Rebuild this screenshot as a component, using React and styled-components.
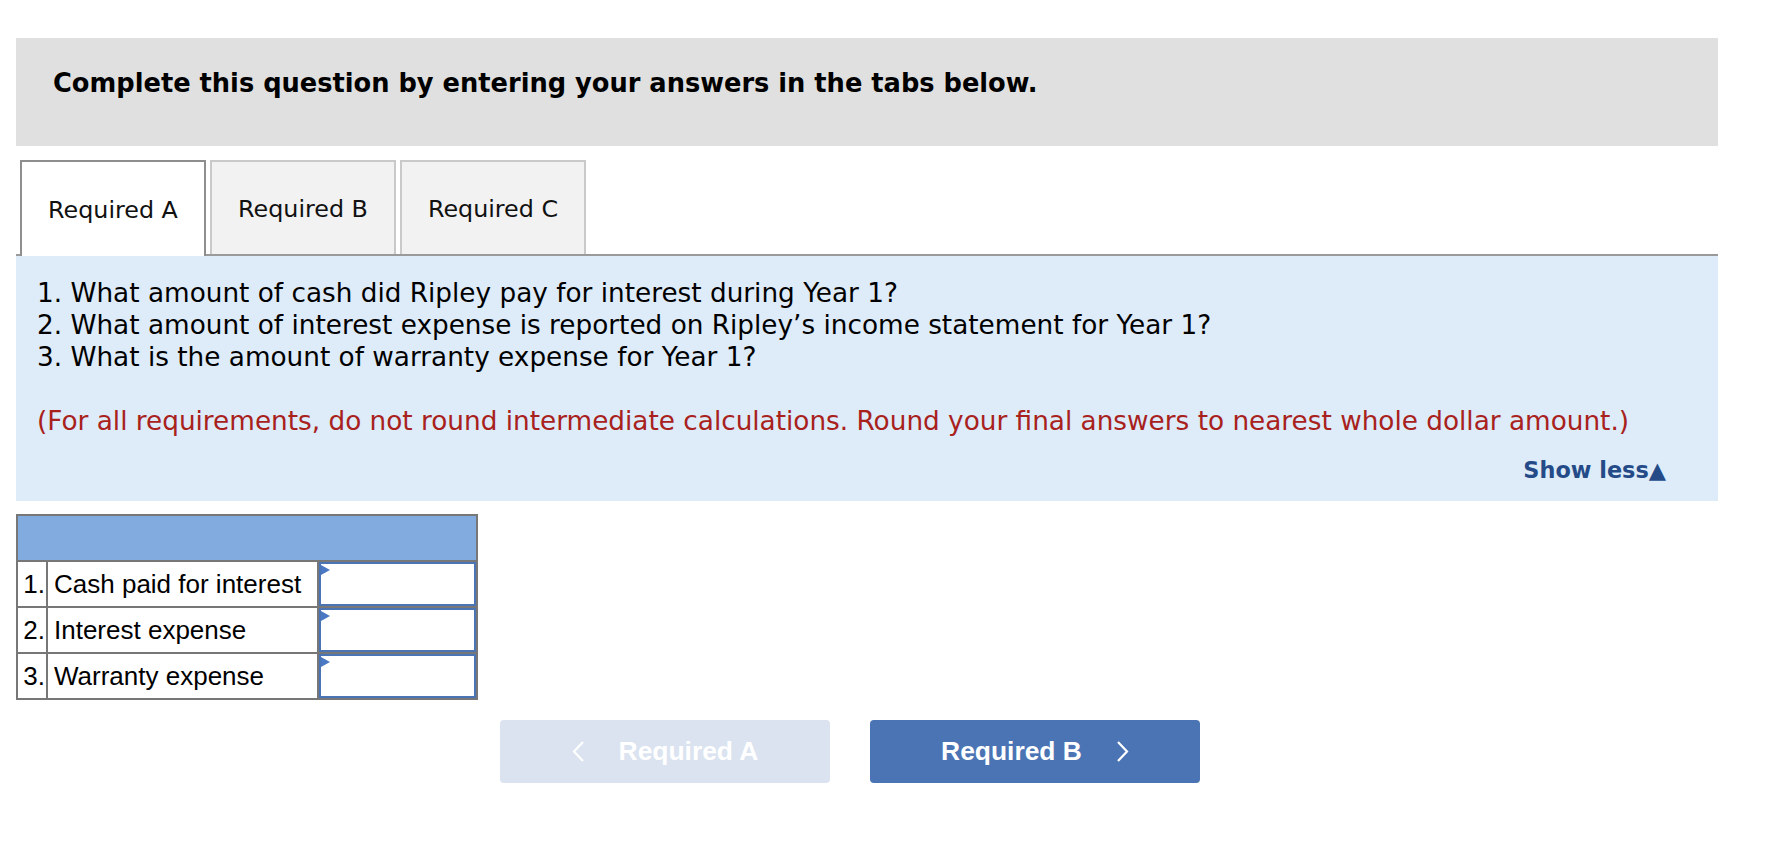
import React, { useState } from "react";
import styled, { createGlobalStyle } from "styled-components";

const GlobalStyle = createGlobalStyle`
  body {
    margin: 0;
    background: #fff;
    color: #000;
    font-family: "DejaVu Sans", Verdana, sans-serif;
  }
`;

const Page = styled.div`
  width: 1702px;
  padding: 38px 0 60px 16px;
`;

const Banner = styled.div`
  box-sizing: border-box;
  height: 108px;
  padding: 29px 37px 0;
  background: #e0e0e0;
  font-size: 25.7px;
  font-weight: bold;
  line-height: 32px;
`;

const TabList = styled.div`
  display: flex;
  align-items: flex-end;
  gap: 4px;
  margin-top: 14px;
  padding-left: 4px;
  border-bottom: 2px solid #9a9a9a;
`;

const Tab = styled.div`
  box-sizing: border-box;
  width: 186px;
  height: ${(p) => (p.$active ? "96px" : "94px")};
  margin-bottom: ${(p) => (p.$active ? "-2px" : "0")};
  padding-top: 2px;
  display: flex;
  align-items: center;
  justify-content: center;
  border: 2px solid ${(p) => (p.$active ? "#8e8e8e" : "#c9c9c9")};
  border-bottom: none;
  background: ${(p) => (p.$active ? "#fff" : "#f2f2f2")};
  font-size: 23.8px;
  color: #111;
  cursor: pointer;
`;

const Panel = styled.div`
  padding: 21px 52px 17px 21px;
  background: #deebf8;
`;

const Line = styled.div`
  font-size: 26.3px;
  line-height: 32px;
`;

const Note = styled(Line)`
  margin-top: 32px;
  color: #a8211c;
`;

const ShowLess = styled.div`
  margin-top: 19px;
  text-align: right;
  font-size: 22.4px;
  font-weight: bold;
  line-height: 28px;
  color: #244b88;
`;

const Grid = styled.div`
  display: inline-grid;
  grid-template-columns: 28px 269px 157px;
  grid-auto-rows: 44px;
  gap: 2px;
  margin-top: 13px;
  border: 2px solid #777;
  background: #777;
  font-family: "Liberation Sans", Arial, sans-serif;
  font-size: 26px;
`;

const HeadCell = styled.div`
  grid-column: 1 / -1;
  background: #82abdf;
`;

const NumCell = styled.div`
  display: flex;
  align-items: center;
  justify-content: flex-end;
  padding-right: 1px;
  background: #fff;
`;

const LabelCell = styled.div`
  display: flex;
  align-items: center;
  padding-left: 6px;
  background: #fff;
  white-space: nowrap;
`;

const InputCell = styled.div`
  position: relative;
  background: #fff;

  &::before {
    content: "";
    position: absolute;
    top: 3px;
    left: 2px;
    border-top: 5px solid transparent;
    border-bottom: 5px solid transparent;
    border-left: 9px solid #4a78c2;
  }
`;

const Field = styled.input`
  box-sizing: border-box;
  width: 100%;
  height: 100%;
  margin: 0;
  border: 2px solid #4a74b4;
  outline: none;
  padding: 0 8px;
  font: inherit;
  text-align: right;
`;

const ButtonRow = styled.div`
  display: flex;
  gap: 40px;
  margin-top: 20px;
  padding-left: 484px;
`;

const NavButton = styled.button`
  width: 330px;
  height: 63px;
  display: flex;
  align-items: center;
  justify-content: center;
  gap: 34px;
  border: none;
  border-radius: 4px;
  background: ${(p) => (p.disabled ? "#dae3ef" : "#4a74b4")};
  color: #fff;
  font-family: "Liberation Sans", Arial, sans-serif;
  font-size: 26.4px;
  font-weight: bold;
  cursor: ${(p) => (p.disabled ? "default" : "pointer")};
`;

const Chevron = ({ dir }) => (
  <svg width="13" height="21" viewBox="0 0 13 21">
    <polyline
      points={dir === "left" ? "11,1 2,10.5 11,20" : "2,1 11,10.5 2,20"}
      fill="none"
      stroke="#fff"
      strokeWidth="2.2"
    />
  </svg>
);

const rows = [
  "Cash paid for interest",
  "Interest expense",
  "Warranty expense",
];

const App = () => {
  const [current, setCurrent] = useState(0);
  const tabs = ["Required A", "Required B", "Required C"];

  return (
    <>
      <GlobalStyle />
      <Page>
        <Banner>Complete this question by entering your answers in the tabs below.</Banner>
        <TabList>
          {tabs.map((tab, index) => (
            <Tab
              key={tab}
              $active={index === current}
              onClick={() => setCurrent(index)}
            >
              {tab}
            </Tab>
          ))}
        </TabList>
        <Panel>
          <Line>1. What amount of cash did Ripley pay for interest during Year 1?</Line>
          <Line>2. What amount of interest expense is reported on Ripley’s income statement for Year 1?</Line>
          <Line>3. What is the amount of warranty expense for Year 1?</Line>
          <Note>
            (For all requirements, do not round intermediate calculations. Round your final answers to nearest whole dollar amount.)
          </Note>
          <ShowLess>Show less▲</ShowLess>
        </Panel>
        <Grid>
          <HeadCell />
          {rows.map((label, index) => (
            <React.Fragment key={label}>
              <NumCell>{index + 1}.</NumCell>
              <LabelCell>{label}</LabelCell>
              <InputCell>
                <Field type="text" />
              </InputCell>
            </React.Fragment>
          ))}
        </Grid>
        <ButtonRow>
          <NavButton disabled>
            <Chevron dir="left" />
            Required A
          </NavButton>
          <NavButton onClick={() => setCurrent(1)}>
            Required B
            <Chevron dir="right" />
          </NavButton>
        </ButtonRow>
      </Page>
    </>
  );
};

export default App;
